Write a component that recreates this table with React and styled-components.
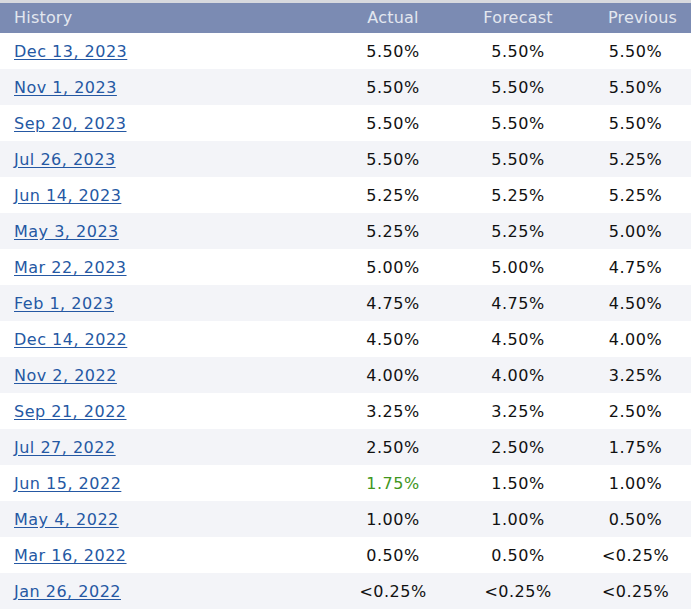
import React from 'react';
import styled, { createGlobalStyle } from 'styled-components';

const GlobalStyle = createGlobalStyle`
  html, body {
    margin: 0;
    padding: 0;
    background: #ffffff;
  }
  body {
    font-family: 'DejaVu Sans', Verdana, sans-serif;
  }
`;

const colors = {
  topBand: '#d7d9de',
  header: '#7b8bb3',
  headerText: '#e3e7ef',
  stripe: '#f3f4f8',
  link: '#2558a3',
  text: '#111111',
  green: '#41961d',
};

const Table = styled.div`
  width: 691px;
  border-top: 3px solid ${colors.topBand};
`;

const Row = styled.div`
  display: grid;
  grid-template-columns: 330px 126px 124px 111px;
  align-items: center;
  box-sizing: border-box;
  height: ${({ $header }) => ($header ? '30px' : '36px')};
  padding-bottom: ${({ $header }) => ($header ? '2px' : '0')};
  background: ${({ $header, $striped }) =>
    $header ? colors.header : $striped ? colors.stripe : '#ffffff'};
  font-size: 16px;
  letter-spacing: 0.5px;
`;

const HeadCell = styled.div`
  color: ${colors.headerText};
  letter-spacing: 0.2px;
  text-align: ${({ $left }) => ($left ? 'left' : 'center')};
  padding-left: ${({ $left, $shift }) => ($left ? '14px' : `${$shift || 0}px`)};
`;

const DateCell = styled.div`
  padding-left: 14px;
`;

const DateLink = styled.a`
  color: ${colors.link};
  text-decoration: underline;
  text-underline-offset: 2px;
  cursor: pointer;
`;

const Value = styled.div`
  text-align: center;
  color: ${({ $good }) => ($good ? colors.green : colors.text)};
`;

const history = [
  ['Dec 13, 2023', '5.50%', '5.50%', '5.50%'],
  ['Nov 1, 2023', '5.50%', '5.50%', '5.50%'],
  ['Sep 20, 2023', '5.50%', '5.50%', '5.50%'],
  ['Jul 26, 2023', '5.50%', '5.50%', '5.25%'],
  ['Jun 14, 2023', '5.25%', '5.25%', '5.25%'],
  ['May 3, 2023', '5.25%', '5.25%', '5.00%'],
  ['Mar 22, 2023', '5.00%', '5.00%', '4.75%'],
  ['Feb 1, 2023', '4.75%', '4.75%', '4.50%'],
  ['Dec 14, 2022', '4.50%', '4.50%', '4.00%'],
  ['Nov 2, 2022', '4.00%', '4.00%', '3.25%'],
  ['Sep 21, 2022', '3.25%', '3.25%', '2.50%'],
  ['Jul 27, 2022', '2.50%', '2.50%', '1.75%'],
  ['Jun 15, 2022', '1.75%', '1.50%', '1.00%', true],
  ['May 4, 2022', '1.00%', '1.00%', '0.50%'],
  ['Mar 16, 2022', '0.50%', '0.50%', '<0.25%'],
  ['Jan 26, 2022', '<0.25%', '<0.25%', '<0.25%'],
];

const App = () => {
  return (
    <>
      <GlobalStyle />
      <Table>
        <Row $header>
          <HeadCell $left>History</HeadCell>
          <HeadCell>Actual</HeadCell>
          <HeadCell>Forecast</HeadCell>
          <HeadCell $shift={14}>Previous</HeadCell>
        </Row>
        {history.map(([date, actual, forecast, previous, good], i) => (
          <Row key={date} $striped={i % 2 === 1}>
            <DateCell>
              <DateLink>{date}</DateLink>
            </DateCell>
            <Value $good={good}>{actual}</Value>
            <Value>{forecast}</Value>
            <Value>{previous}</Value>
          </Row>
        ))}
      </Table>
    </>
  );
};

export default App;
